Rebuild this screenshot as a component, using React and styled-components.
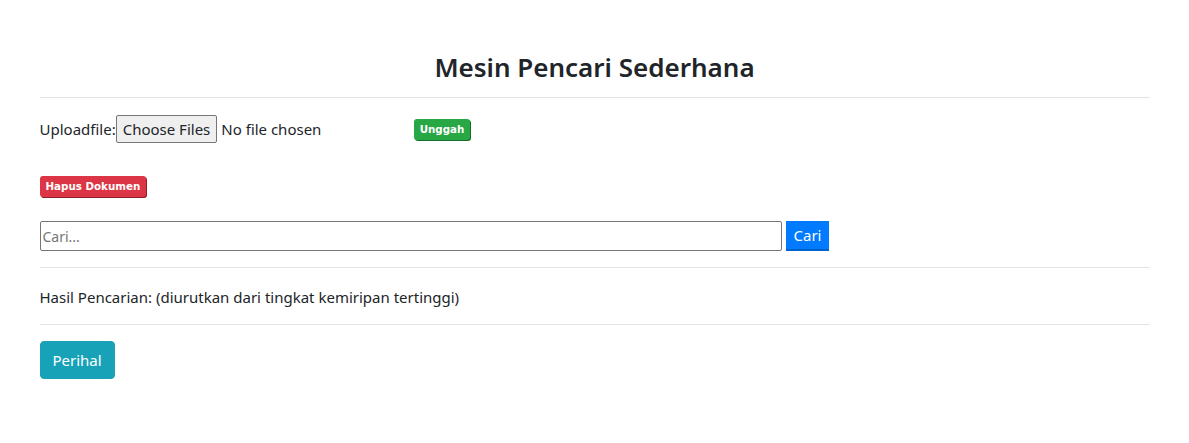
import React from "react";
import styled, { createGlobalStyle } from "styled-components";

const Global = createGlobalStyle`
  html, body { margin: 0; padding: 0; background: #fff; }
  body {
    font-family: "Noto Sans", "Open Sans", sans-serif;
    font-size: 15px;
    color: #212529;
  }
`;

const Container = styled.div`
  width: 1110px;
  margin: 0 auto;
  padding: 49px 0 0;
`;

const Title = styled.h2`
  margin: 0;
  text-align: center;
  font-size: 26px;
  font-weight: 600;
  line-height: 36px;
  color: #212529;
`;

const Rule = styled.hr`
  margin: ${(p) => p.$m || "12px 0"};
  border: 0;
  border-top: 1px solid #e3e3e3;
`;

const UploadRow = styled.form`
  display: flex;
  align-items: center;
  height: 30px;
  margin-top: 16px;
`;

const Label = styled.span`
  font-size: 15px;
`;

const FileInput = styled.input`
  font-family: inherit;
  font-size: 15px;
  width: 298px;
  &::file-selector-button {
    font-family: inherit;
    font-size: 15px;
    padding: 3px 6px;
    margin-right: 4px;
    border: 1px solid #767676;
    border-radius: 2px;
    background: #efefef;
    color: #212529;
  }
`;

const Badge = styled.button`
  font-family: "DejaVu Sans", Verdana, sans-serif;
  font-size: 10.3px;
  font-weight: 700;
  color: #fff;
  background: ${(p) => p.$bg};
  border: 0;
  border-radius: 3px;
  padding: 4px 6px;
  line-height: 13px;
  box-shadow: 1px 1px 0 ${(p) => p.$shadow};
  cursor: pointer;
`;

const DeleteRow = styled.div`
  margin-top: 31px;
  height: 22px;
  display: flex;
  align-items: center;
`;

const SearchRow = styled.form`
  display: flex;
  align-items: center;
  gap: 4px;
  margin-top: 24px;
`;

const SearchInput = styled.input`
  box-sizing: border-box;
  width: 742px;
  height: 30px;
  border: 1px solid #767676;
  border-radius: 2px;
  padding: 0 2px;
  font-family: "Noto Sans", sans-serif;
  font-size: 14px;
  color: #212529;
  &::placeholder { color: #757575; }
`;

const SearchButton = styled.button`
  box-sizing: border-box;
  height: 30px;
  padding: 0 8px;
  background: #007bff;
  color: #fff;
  border: 0;
  border-bottom: 2px solid #0062cc;
  font-family: "Noto Sans", sans-serif;
  font-size: 15px;
`;

const Results = styled.p`
  margin: 0;
  padding: 19px 0 17px;
  font-size: 15px;
`;

const InfoButton = styled.button`
  margin-top: 16px;
  background: #17a2b8;
  color: #fff;
  border: 1px solid #17a2b8;
  border-radius: 4px;
  padding: 0 12px;
  height: 38px;
  font-family: "Noto Sans", sans-serif;
  font-size: 15px;
`;

export default function App() {
  return (
    <>
      <Global />
      <Container>
        <Title>Mesin Pencari Sederhana</Title>
        <Rule $m="12px 0 0" />
        <UploadRow>
          <Label>Uploadfile:</Label>
          <FileInput type="file" multiple />
          <Badge type="button" $bg="#28a745" $shadow="#166e2a">Unggah</Badge>
        </UploadRow>
        <DeleteRow>
          <Badge type="button" $bg="#dc3545" $shadow="#8f1d28">Hapus Dokumen</Badge>
        </DeleteRow>
        <SearchRow>
          <SearchInput placeholder="Cari..." />
          <SearchButton type="button">Cari</SearchButton>
        </SearchRow>
        <Rule $m="16px 0 0" />
        <Results>Hasil Pencarian: (diurutkan dari tingkat kemiripan tertinggi)</Results>
        <Rule $m="0" />
        <InfoButton type="button">Perihal</InfoButton>
      </Container>
    </>
  );
}
